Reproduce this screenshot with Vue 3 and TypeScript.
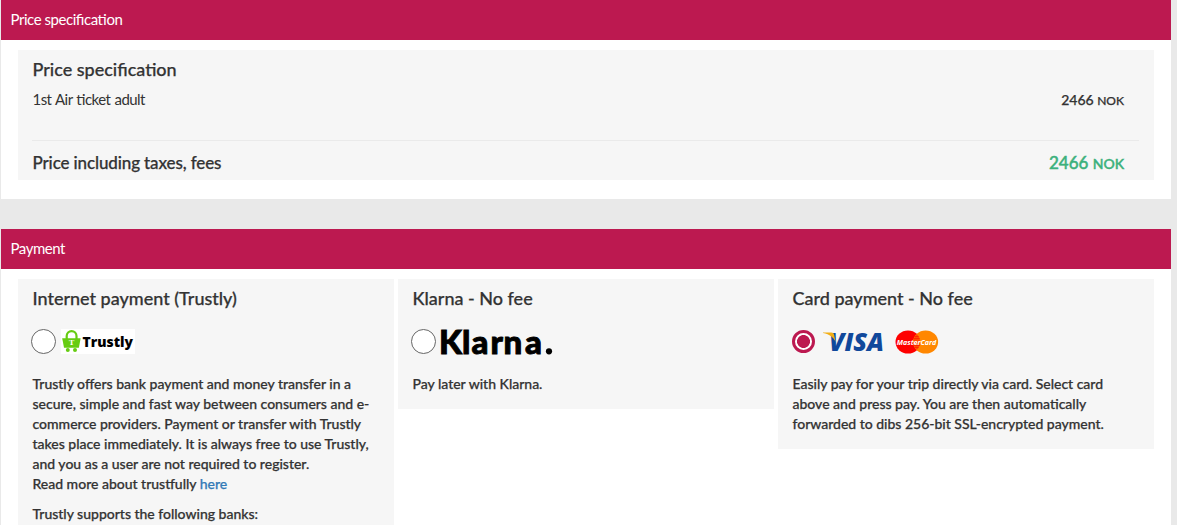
<script setup lang="ts">
import { ref } from 'vue';

type Method = 'trustly' | 'klarna' | 'card';

interface PaymentOption {
  id: Method;
  title: string;
  lines: string[];
}

const selected = ref<Method>('card');

const options: PaymentOption[] = [
  {
    id: 'trustly',
    title: 'Internet payment (Trustly)',
    lines: [
      'Trustly offers bank payment and money transfer in a',
      'secure, simple and fast way between consumers and e-',
      'commerce providers. Payment or transfer with Trustly',
      'takes place immediately. It is always free to use Trustly,',
      'and you as a user are not required to register.',
    ],
  },
  { id: 'klarna', title: 'Klarna - No fee', lines: ['Pay later with Klarna.'] },
  {
    id: 'card',
    title: 'Card payment - No fee',
    lines: [
      'Easily pay for your trip directly via card. Select card',
      'above and press pay. You are then automatically',
      'forwarded to dibs 256-bit SSL-encrypted payment.',
    ],
  },
];
</script>

<template>
  <main class="page">
    <section class="panel panel--price">
      <header class="panel__header">Price specification</header>
      <div class="panel__body">
        <div class="price">
          <h3 class="title">Price specification</h3>
          <div class="price__row">
            <span class="price__label">1st Air ticket adult</span>
            <span class="price__amount">2466 <small>NOK</small></span>
          </div>
          <div class="price__total">
            <span class="price__total-label">Price including taxes, fees</span>
            <span class="price__total-amount">2466 <small>NOK</small></span>
          </div>
        </div>
      </div>
    </section>

    <section class="panel">
      <header class="panel__header">Payment</header>
      <div class="panel__body methods">
        <article v-for="option in options" :key="option.id" class="method">
          <h3 class="title">{{ option.title }}</h3>
          <label class="method__choice" :class="`method__choice--${option.id}`">
            <input v-model="selected" class="radio" type="radio" name="payment" :value="option.id" />

            <svg v-if="option.id === 'trustly'" class="logo" width="74" height="25" viewBox="0 0 74 25">
              <rect width="74" height="25" fill="#fff" />
              <path d="M5.7 10V7a4.9 4.9 0 0 1 9.8 0v3" fill="none" stroke="#66cc12" stroke-width="2.2" />
              <path d="M1.2 9.3h18.4l-1.7 9.4H3z" fill="#66cc12" />
              <circle cx="6.8" cy="21" r="2" fill="#66cc12" />
              <circle cx="14" cy="21" r="2" fill="#66cc12" />
              <text x="8" y="16.4" class="trustly-mark">T</text>
              <text x="21.5" y="18.4" class="trustly-name" textLength="50.5" lengthAdjust="spacingAndGlyphs">Trustly</text>
            </svg>

            <svg v-else-if="option.id === 'klarna'" class="logo" width="113" height="32" viewBox="0 0 113 32">
              <text x="-1 22 31.6 50.6 63.6 85" y="28" class="klarna-name">Klarna</text>
              <circle cx="109" cy="25.3" r="3.1" />
            </svg>

            <template v-else>
              <svg class="logo" width="62" height="24" viewBox="0 0 62 24">
                <text x="6" y="21" class="visa-name" textLength="55" lengthAdjust="spacingAndGlyphs">VISA</text>
                <path d="M0 2.4h8.1c1.8 0 2.7.8 3 2.3l1.5 7.2C10.6 7.5 6.8 4.4 0 3z" fill="#f2ae14" />
              </svg>
              <svg class="logo" width="44" height="24" viewBox="0 0 44 24">
                <ellipse cx="13" cy="12" rx="12.5" ry="11.6" fill="#fe0000" />
                <ellipse cx="30.6" cy="12" rx="12.5" ry="11.6" fill="#ff8700" />
                <path d="M21.8 3.9a11.6 11.6 0 0 0 0 16.2 11.6 11.6 0 0 0 0-16.2z" fill="#ff4b00" />
                <path d="M19.6 6.5h4M18.6 8.5h6M18.4 15.5h6.5M19.6 17.5h4" stroke="#fe2500" stroke-width=".9" />
                <text x="1.8" y="14.5" class="mastercard-name" textLength="39.5" lengthAdjust="spacingAndGlyphs">MasterCard</text>
              </svg>
            </template>
          </label>

          <p class="method__text">
            <template v-for="line in option.lines" :key="line">{{ line }}<br /></template>
            <template v-if="option.id === 'trustly'">Read more about trustfully <a href="#">here</a></template>
          </p>
          <p v-if="option.id === 'trustly'" class="method__text">Trustly supports the following banks:</p>
        </article>
      </div>
    </section>
  </main>
</template>

<style>
body {
  background: #e9e9e9;
  overflow: hidden;
}
</style>

<style scoped>
.page {
  box-sizing: border-box;
  height: 525px;
  padding: 0 6px 0 1px;
  overflow: hidden;
  background: #e9e9e9;
  color: #333;
  font-family: Lato, sans-serif;
  font-size: 14px;
  font-weight: 500;
  line-height: 20px;
  -webkit-text-stroke: 0.25px;
}

.panel {
  min-height: 296px;
  background: #fff;
}

.panel--price {
  min-height: 199px;
  margin-bottom: 30px;
}

.panel__header {
  box-sizing: border-box;
  height: 40px;
  padding-left: 9.5px;
  background: #bc1950;
  color: #fff;
  font-size: 15px;
  font-weight: 400;
  letter-spacing: -0.45px;
  line-height: 38px;
  font-feature-settings: "liga" 1;
  -webkit-text-stroke: 0;
}

.panel__body {
  padding: 10px 17px 0;
}

.title {
  margin: 0;
  font-size: 18px;
  font-weight: 500;
  line-height: 18px;
  padding-bottom: 2px;
}

.price {
  box-sizing: border-box;
  height: 130px;
  padding: 10px 15px 0 14px;
  background: #f6f6f6;
}

.price__row,
.price__total {
  display: flex;
  justify-content: space-between;
  padding-right: 15px;
}

.price__row {
  height: 50px;
  padding-top: 10px;
}

.price__label {
  font-size: 15px;
  font-weight: 400;
  letter-spacing: -0.55px;
  word-spacing: 0.8px;
  line-height: 18px;
  font-feature-settings: "liga" 1;
  -webkit-text-stroke: 0;
}

.price__amount small {
  font-size: 12px;
}

.price__total {
  padding-top: 12px;
  border-top: 1px solid #eaeaea;
  font-size: 17px;
}

.price__total-label {
  letter-spacing: -0.12px;
}

.price__total-amount {
  color: #3cb17c;
  -webkit-text-stroke: 0.45px;
}

.price__total-amount small {
  font-size: 14px;
}

.methods {
  display: grid;
  grid-template-columns: repeat(3, 376px);
  align-items: start;
  gap: 4px;
}

.method {
  box-sizing: border-box;
  padding: 10px 14px 15px;
  background: #f6f6f6;
}

.title,
.price__label,
.price__total-label,
.method__text {
  padding-left: 0.5px;
}

.method__choice {
  display: flex;
  align-items: center;
  height: 25px;
  margin: 20px 0 20px -1px;
}

.method__choice--trustly {
  gap: 5px;
}

.method__choice--klarna {
  gap: 4px;
}

.method__choice--card {
  gap: 7px;
}

.method__choice--card .logo:last-child {
  margin-left: 3px;
}

.radio {
  appearance: none;
  box-sizing: border-box;
  flex: none;
  width: 25px;
  height: 25px;
  margin: 0;
  border: 1px solid #666;
  border-radius: 50%;
  background: #fff;
}

.radio:checked {
  width: 23px;
  height: 23px;
  margin: 0 1px;
  border: 3px solid #bc1950;
  background: radial-gradient(circle, #bc1950 0 6.1px, #fff 6.8px);
}

.logo {
  display: block;
  flex: none;
  overflow: visible;
  -webkit-text-stroke: 0;
}

.trustly-mark {
  fill: #fff;
  font: 700 7px "DejaVu Serif", serif;
}

.trustly-name {
  fill: #000;
  font: 800 14.5px "Open Sans", sans-serif;
}

.klarna-name {
  fill: #000;
  font: 900 33px Lato, sans-serif;
  stroke: #000;
  stroke-width: 0.9px;
}

.visa-name {
  fill: #10489b;
  font: italic 800 25px "Open Sans", sans-serif;
}

.mastercard-name {
  fill: #fff;
  font: italic 700 7.5px "Open Sans", sans-serif;
}

.method__text {
  margin: 0;
  letter-spacing: -0.01px;
  font-feature-settings: "liga" 1;
}

.method__text + .method__text {
  margin-top: 10px;
}

.method__text a {
  color: #337ab7;
  text-decoration: none;
}
</style>
